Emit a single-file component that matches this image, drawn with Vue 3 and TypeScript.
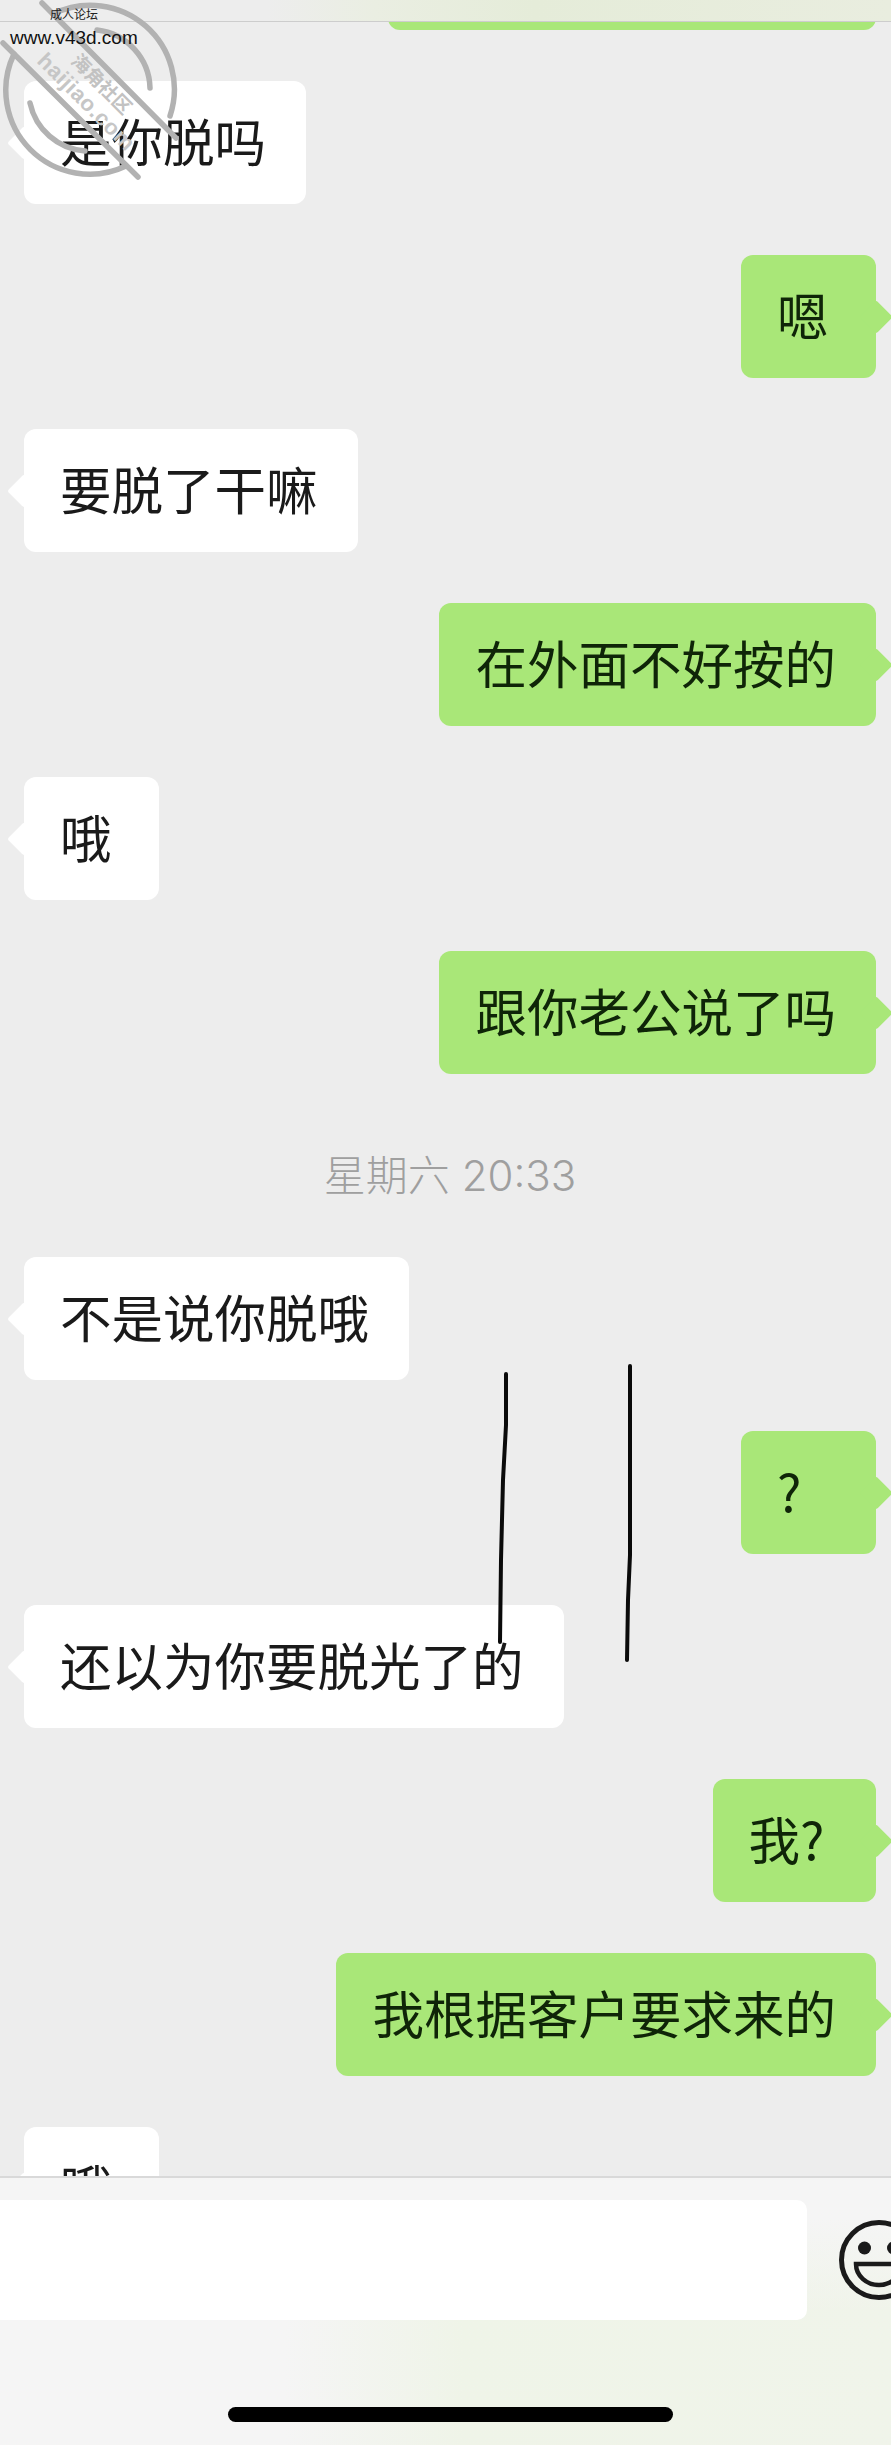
<template>
  <div class="screen">
    <div class="chat">
      <div class="messages">
        <template v-for="(msg, i) in messages" :key="i">
          <div v-if="msg.time" class="time">{{ msg.text }}</div>
          <div v-else class="row" :class="msg.mine ? 'mine' : 'other'">
            <div class="bubble">{{ msg.text }}</div>
          </div>
        </template>
      </div>
      <div class="nav"></div>
      <!-- 手写的两条黑线 -->
      <svg class="scribble" width="891" height="2176" viewBox="0 0 891 2176" fill="none">
        <path d="M506 1374 L506 1425 L503 1480 L501 1560 L500 1642" />
        <path d="M630 1366 L630 1555 L628 1600 L627 1660" />
      </svg>
    </div>

    <div class="bar">
      <div class="bar-row">
        <div class="input"></div>
        <svg class="emoji" width="80" height="80" viewBox="0 0 80 80" fill="none">
          <circle cx="40" cy="40" r="37.5" stroke="#1a1a1a" stroke-width="5" />
          <circle cx="25.5" cy="28" r="6.5" fill="#1a1a1a" />
          <circle cx="54.5" cy="28" r="6.5" fill="#1a1a1a" />
          <path d="M17 44 H63 A23 21 0 0 1 17 44 Z" stroke="#1a1a1a" stroke-width="4.5" />
        </svg>
      </div>
      <div class="home"></div>
    </div>

    <!-- 水印 -->
    <div class="mark">
      <svg class="stamp" width="180" height="180" viewBox="0 0 180 180" fill="none">
        <g stroke="#b2b2b2" stroke-width="5.5" stroke-linecap="round">
          <path d="M53 14 A84 84 0 0 1 170 116" />
          <path d="M126 166 A84 84 0 0 1 14 54" />
          <path d="M97 30 A60 60 0 0 1 150 88" />
          <path d="M30 103 A61 61 0 0 0 85 151" />
          <path d="M42 3 L176 138" />
          <path d="M3 43 L138 177" />
        </g>
        <text class="stamp-cn" transform="translate(70 62) rotate(45)">海角社区</text>
        <text class="stamp-en" transform="translate(36 62) rotate(45)">haijiao.com</text>
      </svg>
      <div class="mark-cn">成人论坛</div>
      <div class="mark-url">www.v43d.com</div>
    </div>
  </div>
</template>

<script setup lang="ts">
interface Message {
  text: string;
  mine?: boolean;
  time?: boolean;
}

const messages: Message[] = [
  { text: '', mine: true },
  { text: '是你脱吗' },
  { text: '嗯', mine: true },
  { text: '要脱了干嘛' },
  { text: '在外面不好按的', mine: true },
  { text: '哦' },
  { text: '跟你老公说了吗', mine: true },
  { text: '星期六 20:33', time: true },
  { text: '不是说你脱哦' },
  { text: '?', mine: true },
  { text: '还以为你要脱光了的' },
  { text: '我? ', mine: true },
  { text: '我根据客户要求来的', mine: true },
  { text: '哦' },
];
</script>

<style>
body {
  background: #ededed;
}
</style>

<style scoped>
.screen {
  position: relative;
  width: 891px;
  height: 2445px;
  overflow: hidden;
  background: #ededed;
  font-family: "Noto Sans CJK SC", "Liberation Sans", sans-serif;
}

.chat {
  position: relative;
  height: 2176px;
  overflow: hidden;
}

.messages {
  display: flex;
  flex-direction: column;
  gap: 51px;
  margin-top: -93px;
}

.nav {
  position: absolute;
  top: 0;
  left: 0;
  right: 0;
  height: 21px;
  border-bottom: 1px solid #cdcdcd;
  background: linear-gradient(90deg, #ededed 30%, #eaeee2 42%, #e5ecd9 60%, #e9eddf 100%);
}

.row {
  display: flex;
  padding: 0 15px 0 24px;
}

.row.mine {
  justify-content: flex-end;
}

/* 第一条只露出底边，宽度单独给 */
.row:first-child .bubble {
  width: 488px;
}

.bubble {
  position: relative;
  box-sizing: border-box;
  min-width: 135px;
  min-height: 123px;
  padding: 33px 40px 39px 36px;
  border-radius: 12px;
  font-size: 51.5px;
  line-height: 51px;
  white-space: pre;
}

.bubble::after {
  content: "";
  position: absolute;
  top: 50%;
  width: 24px;
  height: 24px;
  margin-top: -12px;
  border-radius: 3px;
  transform: rotate(45deg);
  background: inherit;
}

.other .bubble {
  background: #fff;
  color: #1a1a1a;
}

.other .bubble::after {
  left: -12px;
}

.mine .bubble {
  background: #a9e778;
  color: #0f2508;
}

.mine .bubble::after {
  right: -12px;
}

.time {
  height: 60px;
  padding: 21px 0 0 9px;
  text-align: center;
  font-family: Inter, "Noto Sans CJK SC", sans-serif;
  font-size: 42px;
  font-weight: 300;
  line-height: 60px;
  color: #9f9f9f;
}

.scribble {
  position: absolute;
  top: 0;
  left: 0;
}

.scribble path {
  stroke: #0a0a0a;
  stroke-width: 4;
  stroke-linecap: round;
  stroke-linejoin: round;
}

.bar {
  box-sizing: border-box;
  height: 269px;
  padding-top: 22px;
  border-top: 2px solid #d9d9d9;
  overflow: hidden;
  background:
    linear-gradient(180deg, #f5f5f5 15%, rgba(245, 245, 245, 0) 50%),
    linear-gradient(90deg, #f5f5f5 32%, #eff4e8 52%, #f0f4ea 100%);
}

.bar-row {
  display: flex;
  align-items: center;
}

.input {
  flex: none;
  width: 827px;
  height: 120px;
  margin-left: -20px;
  border-radius: 10px;
  background: #fff;
}

.emoji {
  flex: none;
  margin-left: 32px;
}

.home {
  width: 445px;
  height: 15px;
  margin: 87px 0 0 228px;
  border-radius: 8px;
  background: #000;
}

.mark {
  position: absolute;
  top: 0;
  left: 0;
  width: 180px;
  height: 180px;
}

.stamp {
  position: absolute;
  top: 0;
  left: 0;
}

.stamp-cn {
  font-size: 19px;
  font-weight: 700;
  fill: #c2c2c2;
}

.stamp-en {
  font-family: "Liberation Sans", sans-serif;
  font-size: 22px;
  font-weight: 700;
  letter-spacing: 0.6px;
  fill: #c6c6c6;
}

.mark-cn {
  position: absolute;
  top: 5px;
  left: 50px;
  font-size: 12px;
  line-height: 18px;
  color: #222;
}

.mark-url {
  position: absolute;
  top: 27px;
  left: 10px;
  font-family: "Liberation Sans", sans-serif;
  font-size: 19px;
  line-height: 22px;
  color: #111;
}
</style>
